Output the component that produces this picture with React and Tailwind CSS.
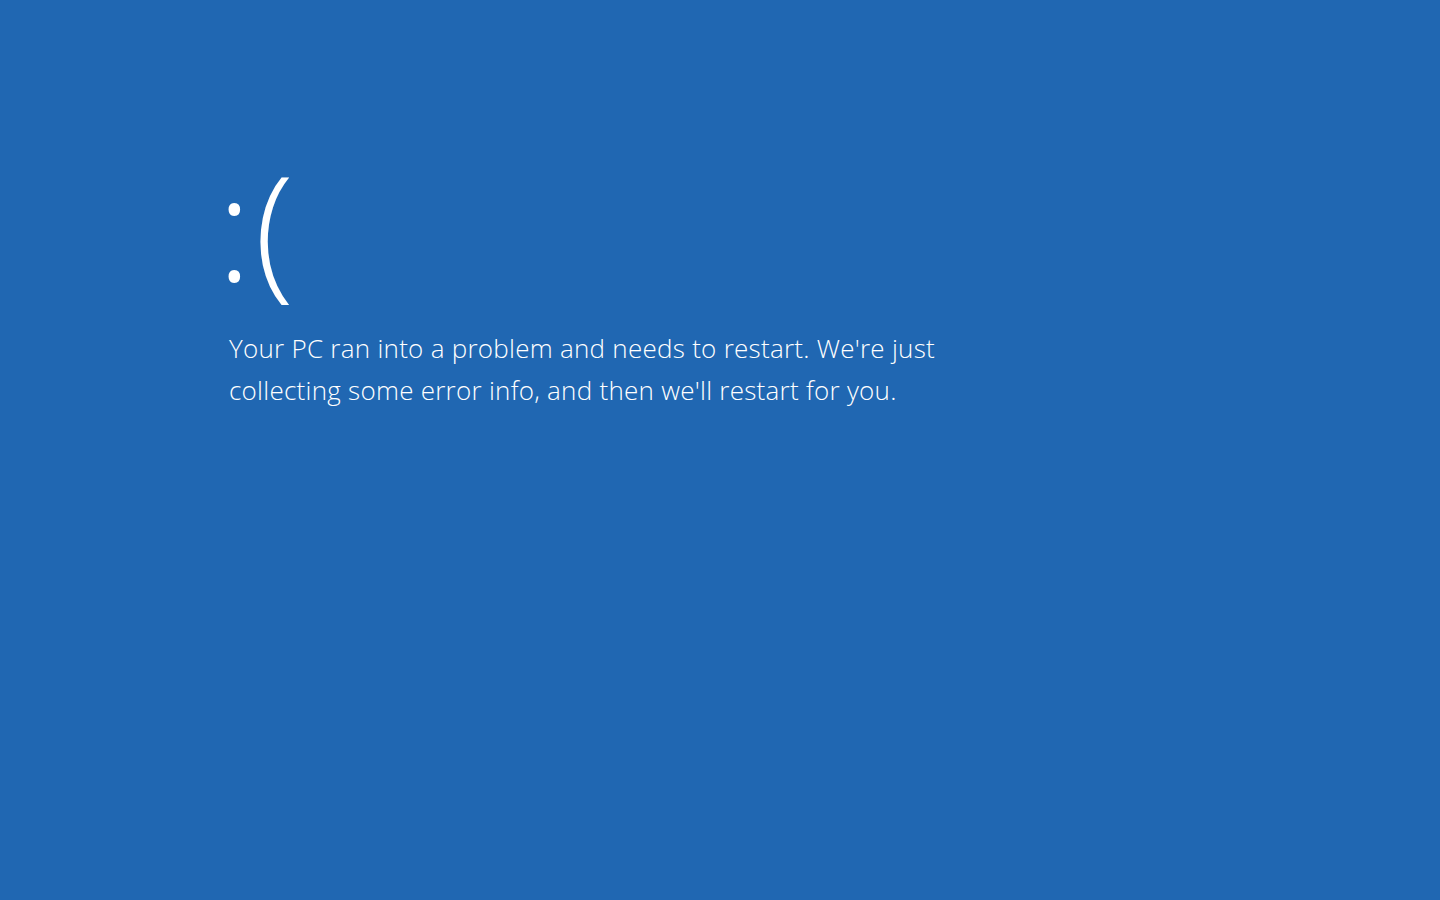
export default function App() {
  return (
    <div className="w-[1440px] h-[900px] bg-[#2067b2] text-white overflow-hidden" style={{ fontFamily: '"Open Sans", "Noto Sans", sans-serif' }}>
      <div className="pl-[217px] pt-[136px] flex flex-col">
        <div className="text-[145px] font-light leading-[180px] tracking-[0.02em]">:(</div>
        <div className="mt-[11px] pl-[12px] text-[26px] font-light leading-[42px] tracking-[0.01em] w-[800px]">
          <p>Your PC ran into a problem and needs to restart. We're just</p>
          <p>collecting some error info, and then we'll restart for you.</p>
        </div>
      </div>
    </div>
  );
}
